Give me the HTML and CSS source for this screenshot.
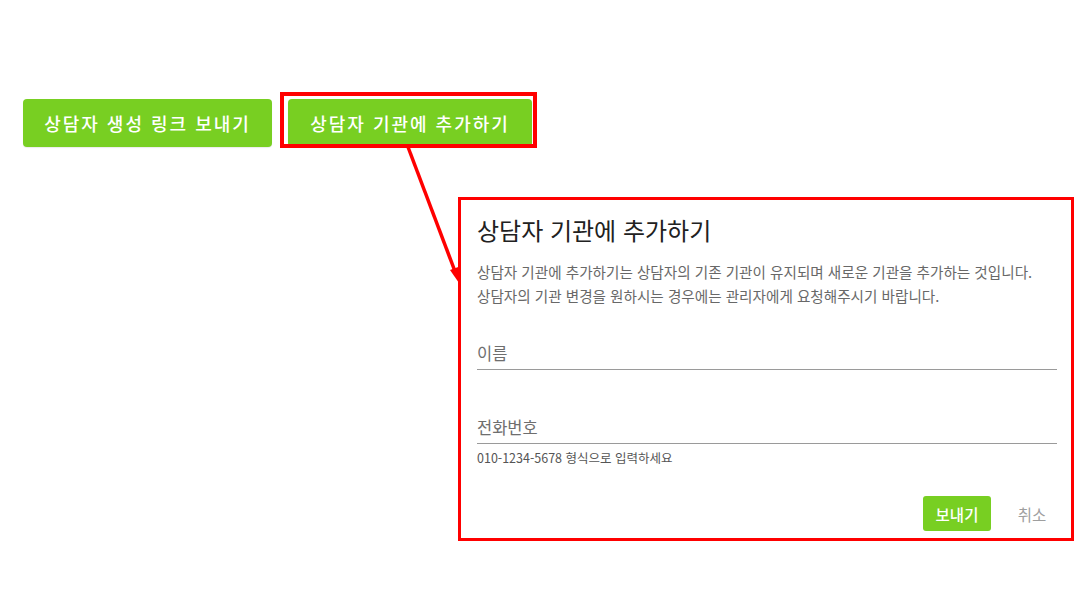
FILE: index.html
```html
<!DOCTYPE html>
<html lang="ko">
<head>
<meta charset="utf-8">
<title>상담자 기관에 추가하기</title>
<link rel="stylesheet" href="styles.css">
</head>
<body>
<div class="page">
  <div class="actions">
    <button class="btn-primary btn-wide">상담자 생성 링크 보내기</button>
    <button class="btn-primary btn-add">상담자 기관에 추가하기</button>
  </div>

  <div class="dialog highlight">
    <h2 class="dialog-title">상담자 기관에 추가하기</h2>
    <p class="dialog-desc">상담자 기관에 추가하기는 상담자의 기존 기관이 유지되며 새로운 기관을 추가하는 것입니다.<br>상담자의 기관 변경을 원하시는 경우에는 관리자에게 요청해주시기 바랍니다.</p>
    <div class="field field-name">
      <input class="field-input" type="text" placeholder="이름">
    </div>
    <div class="field field-phone">
      <input class="field-input" type="text" placeholder="전화번호">
    </div>
    <div class="field-help">010-1234-5678 형식으로 입력하세요</div>
    <div class="dialog-actions">
      <button class="btn-send">보내기</button>
      <button class="btn-cancel">취소</button>
    </div>
  </div>

  <div class="annot-box"></div>
  <svg class="annot-arrow" width="1080" height="608" viewBox="0 0 1080 608">
    <line x1="408" y1="147" x2="456" y2="274" stroke="#ff0000" stroke-width="3.5"/>
    <polygon points="459,283 450,270 461,266" fill="#ff0000"/>
  </svg>
</div>
</body>
</html>
```

FILE: styles.css
```css
* { box-sizing: border-box; }
html, body { margin: 0; padding: 0; background: #ffffff; }
body {
  font-family: "Noto Sans CJK KR", "Noto Sans", sans-serif;
  width: 1080px;
  height: 608px;
  overflow: hidden;
}
.page {
  position: relative;
  width: 1080px;
  height: 608px;
  padding: 99px 0 0 23px;
}
.actions {
  display: flex;
  gap: 16px;
}
.btn-primary {
  height: 48px;
  border: none;
  border-radius: 4px;
  background: #78cf22;
  color: #ffffff;
  font-family: "Noto Sans CJK KR", sans-serif;
  font-size: 18px;
  font-weight: 500;
  letter-spacing: 2px;
  padding: 0;
  box-shadow: 0 1px 1px rgba(0,0,0,0.08);
}
.btn-wide { width: 249px; }
.btn-add { width: 244px; }

.dialog {
  margin: 50px 0 0 435px;
  width: 616px;
  height: 344px;
  padding: 14px 14px 0 16px;
  background: #ffffff;
}
.highlight { border: 3px solid #ff0000; }
.dialog-title {
  margin: 0;
  font-size: 24px;
  line-height: 32px;
  font-weight: 400;
  color: #212121;
}
.dialog-desc {
  margin: 14px 0 0;
  font-size: 14.6px;
  line-height: 24px;
  color: #686868;
}
.field { border-bottom: 1px solid #9a9a9a; }
.field-name { margin-top: 33px; }
.field-phone { margin-top: 45px; }
.field-input {
  display: block;
  width: 100%;
  border: none;
  outline: none;
  padding: 0 0 4px;
  height: 28px;
  font-family: "Noto Sans CJK KR", sans-serif;
  font-size: 16.5px;
  line-height: 24px;
  color: #212121;
  background: transparent;
}
.field-input::placeholder { color: #6e6e6e; }
.field-help {
  margin-top: 6px;
  font-size: 12.5px;
  line-height: 16px;
  color: #555555;
}
.dialog-actions {
  margin-top: 30px;
  display: flex;
  justify-content: flex-end;
  gap: 16px;
}
.btn-send {
  width: 68px;
  height: 35px;
  border: none;
  border-radius: 3px;
  background: #78cf22;
  color: #ffffff;
  font-family: "Noto Sans CJK KR", sans-serif;
  font-size: 15.5px;
  font-weight: 500;
  padding: 0;
}
.btn-cancel {
  width: 50px;
  height: 35px;
  border: none;
  background: transparent;
  color: #9e9e9e;
  font-family: "Noto Sans CJK KR", sans-serif;
  font-size: 15.5px;
  padding: 0;
}
.annot-box {
  position: absolute;
  left: 280px;
  top: 92px;
  width: 257px;
  height: 56px;
  border: 4px solid #ff0000;
}
.annot-arrow {
  position: absolute;
  left: 0;
  top: 0;
  pointer-events: none;
}
```
